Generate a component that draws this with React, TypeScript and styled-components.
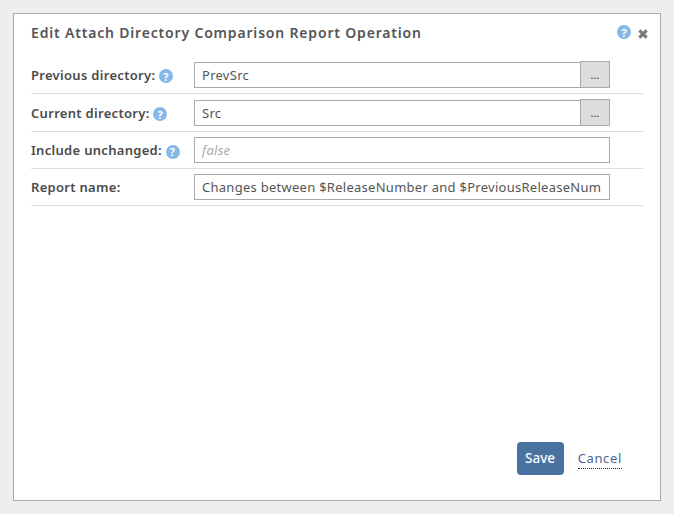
import styled, { createGlobalStyle } from 'styled-components';

const fontStack = '"Noto Sans", "Open Sans", sans-serif';

const GlobalStyle = createGlobalStyle`
  html, body {
    margin: 0;
    padding: 0;
    background: #eeeeee;
    font-family: ${fontStack};
  }
  * {
    box-sizing: border-box;
  }
`;

const HelpIcon = () => <HelpCircle>?</HelpCircle>;

const CloseIcon = () => (
  <CloseGlyph width="10" height="10" viewBox="0 0 10 10">
    <path d="M1.4 1.4 L8.6 8.6 M8.6 1.4 L1.4 8.6" stroke="#7a7a7a" strokeWidth="3.2" />
  </CloseGlyph>
);

const App = () => {
  return (
    <>
      <GlobalStyle />
      <Page>
        <Dialog>
          <Header>
            <Title>Edit Attach Directory Comparison Report Operation</Title>
            <HeaderIcons>
              <HelpIcon />
              <CloseIcon />
            </HeaderIcons>
          </Header>
          <Form>
            <Row>
              <Label>Previous directory: <HelpIcon /></Label>
              <Field>
                <TextInput defaultValue="PrevSrc" $joined />
                <BrowseButton>...</BrowseButton>
              </Field>
            </Row>
            <Row>
              <Label>Current directory: <HelpIcon /></Label>
              <Field>
                <TextInput defaultValue="Src" $joined />
                <BrowseButton>...</BrowseButton>
              </Field>
            </Row>
            <Row>
              <Label>Include unchanged: <HelpIcon /></Label>
              <Field>
                <TextInput placeholder="false" />
              </Field>
            </Row>
            <Row>
              <Label>Report name:</Label>
              <Field>
                <TextInput defaultValue="Changes between $ReleaseNumber and $PreviousReleaseNumber" />
              </Field>
            </Row>
          </Form>
          <Footer>
            <SaveButton>Save</SaveButton>
            <CancelLink>Cancel</CancelLink>
          </Footer>
        </Dialog>
      </Page>
    </>
  );
};

export default App;

const Page = styled.div`
  width: 674px;
  height: 514px;
  padding: 13px;
`;

const Dialog = styled.div`
  width: 648px;
  height: 488px;
  display: flex;
  flex-direction: column;
  padding: 0 17px;
  background: #ffffff;
  border: 1px solid #aaaaaa;
`;

const Header = styled.div`
  height: 42px;
  display: flex;
  align-items: flex-start;
  justify-content: space-between;
  padding-top: 9px;
`;

const Title = styled.h1`
  margin: 0;
  font-size: 14px;
  line-height: 20px;
  font-weight: 600;
  letter-spacing: 0.82px;
  color: #555555;
`;

const HeaderIcons = styled.div`
  display: flex;
  align-items: center;
  gap: 7px;
  height: 18px;
  margin-right: -5px;
`;

const CloseGlyph = styled.svg`
  margin-top: 3px;
`;

const HelpCircle = styled.span`
  display: inline-flex;
  align-items: center;
  justify-content: center;
  width: 14px;
  height: 14px;
  border-radius: 50%;
  background: #85b7e8;
  color: #ffffff;
  font-size: 11px;
  font-weight: 700;
  line-height: 1;
  vertical-align: -1px;
`;

const Form = styled.div`
  display: flex;
  flex-direction: column;
`;

const Row = styled.div`
  display: flex;
  align-items: center;
  padding: 5px 0;
  border-bottom: 1px solid #dddddd;
`;

const Label = styled.label`
  width: 163px;
  font-size: 13px;
  font-weight: 600;
  letter-spacing: 0.3px;
  white-space: nowrap;
  color: #4a4a4a;
`;

const Field = styled.div`
  width: 416px;
  display: flex;
  align-items: flex-end;
`;

const TextInput = styled.input<{ $joined?: boolean }>`
  flex: 1;
  min-width: 0;
  height: 26px;
  padding: 0 7px;
  border: 1px solid #aaaaaa;
  border-right-width: ${(p) => (p.$joined ? 0 : 1)}px;
  outline: none;
  background: #ffffff;
  font-family: ${fontStack};
  font-size: 13px;
  letter-spacing: 0.27px;
  color: #555555;
  &::placeholder {
    font-style: italic;
    color: #aaaaaa;
    opacity: 1;
  }
`;

const BrowseButton = styled.button`
  width: 30px;
  height: 27px;
  padding: 0;
  border: 1px solid #aaaaaa;
  background: #dddddd;
  font-family: ${fontStack};
  font-size: 11px;
  color: #333333;
`;

const Footer = styled.div`
  flex: 1;
  display: flex;
  align-items: flex-end;
  justify-content: flex-end;
  gap: 14px;
  padding: 0 21px 25px 0;
`;

const SaveButton = styled.button`
  width: 47px;
  height: 33px;
  padding: 0 0 2px;
  border: none;
  border-radius: 4px;
  background: #4a72a0;
  color: #ffffff;
  font-family: ${fontStack};
  font-size: 13.5px;
  font-weight: 500;
`;

const CancelLink = styled.a`
  height: 20px;
  margin-bottom: 6px;
  font-size: 13px;
  line-height: 18px;
  letter-spacing: 0.65px;
  color: #4a6690;
  border-bottom: 1px dotted #222222;
`;
